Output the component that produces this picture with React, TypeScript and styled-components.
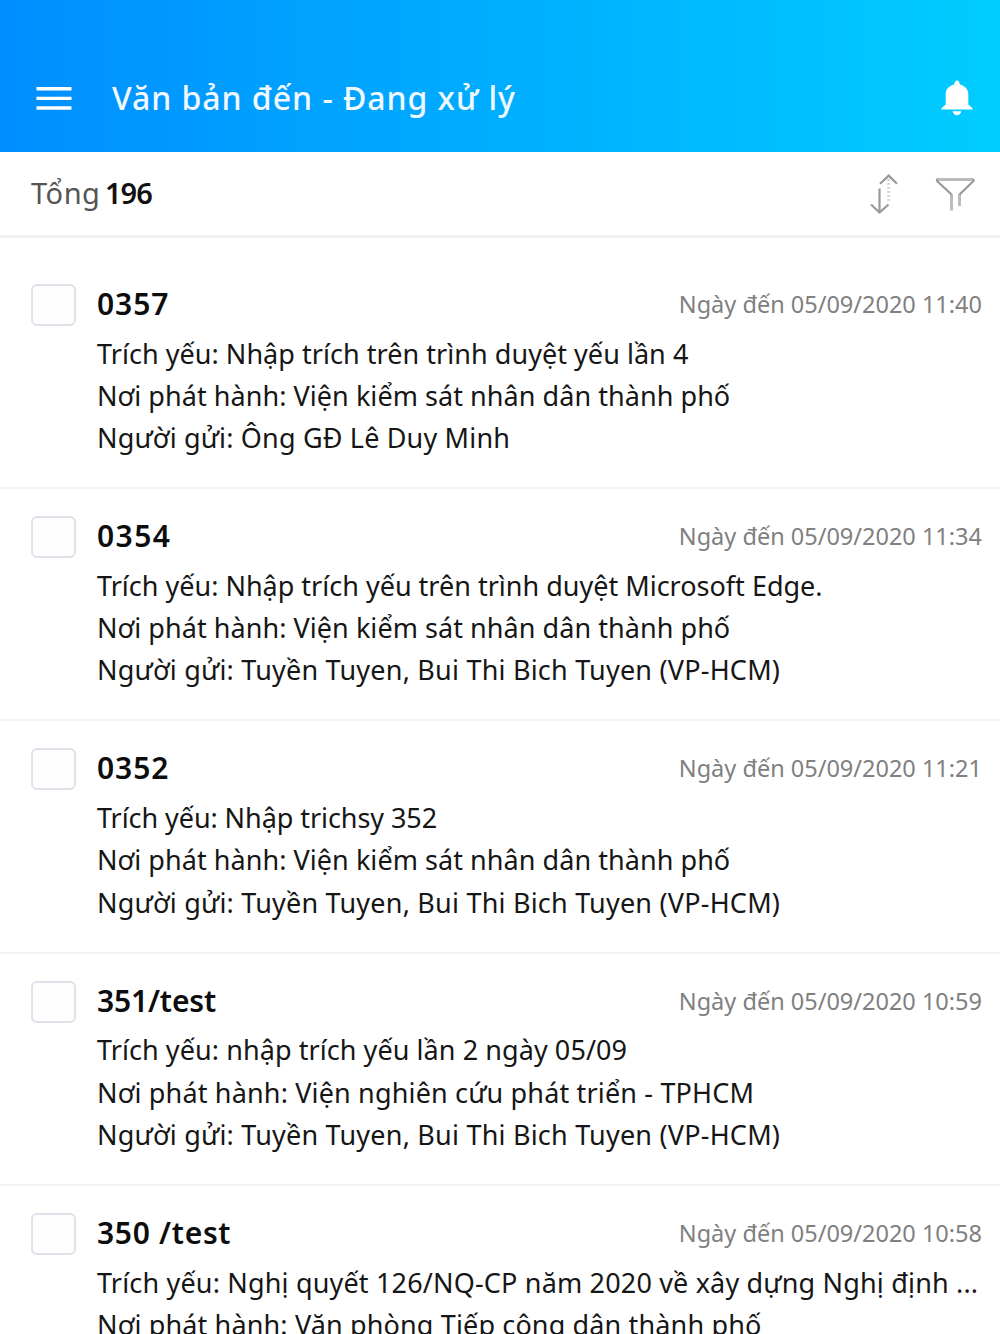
import styled, { createGlobalStyle } from 'styled-components';

const GlobalStyle = createGlobalStyle`
  * {
    box-sizing: border-box;
  }

  body {
    margin: 0;
    background: #fff;
    font-family: "Noto Sans", "Open Sans", sans-serif;
    color: #161616;
  }
`;

type Doc = {
  code: string;
  codeSpacing: number;
  date: string;
  lines: { text: string; spacing: number }[];
};

const docs: Doc[] = [
  {
    code: '0357',
    codeSpacing: 0.95,
    date: 'Ngày đến 05/09/2020 11:40',
    lines: [
      { text: 'Trích yếu: Nhập trích trên trình duyệt yếu lần 4', spacing: 0.04 },
      { text: 'Nơi phát hành: Viện kiểm sát nhân dân thành phố', spacing: 0.05 },
      { text: 'Người gửi: Ông GĐ Lê Duy Minh', spacing: 0.17 },
    ],
  },
  {
    code: '0354',
    codeSpacing: 1.45,
    date: 'Ngày đến 05/09/2020 11:34',
    lines: [
      { text: 'Trích yếu: Nhập trích yếu trên trình duyệt Microsoft Edge.', spacing: 0 },
      { text: 'Nơi phát hành: Viện kiểm sát nhân dân thành phố', spacing: 0.05 },
      { text: 'Người gửi: Tuyền Tuyen, Bui Thi Bich Tuyen (VP-HCM)', spacing: 0.21 },
    ],
  },
  {
    code: '0352',
    codeSpacing: 0.95,
    date: 'Ngày đến 05/09/2020 11:21',
    lines: [
      { text: 'Trích yếu: Nhập trichsy 352', spacing: -0.07 },
      { text: 'Nơi phát hành: Viện kiểm sát nhân dân thành phố', spacing: 0.05 },
      { text: 'Người gửi: Tuyền Tuyen, Bui Thi Bich Tuyen (VP-HCM)', spacing: 0.21 },
    ],
  },
  {
    code: '351/test',
    codeSpacing: -0.15,
    date: 'Ngày đến 05/09/2020 10:59',
    lines: [
      { text: 'Trích yếu: nhập trích yếu lần 2 ngày 05/09', spacing: 0.07 },
      { text: 'Nơi phát hành: Viện nghiên cứu phát triển - TPHCM', spacing: 0.16 },
      { text: 'Người gửi: Tuyền Tuyen, Bui Thi Bich Tuyen (VP-HCM)', spacing: 0.21 },
    ],
  },
  {
    code: '350 /test',
    codeSpacing: 0.7,
    date: 'Ngày đến 05/09/2020 10:58',
    lines: [
      { text: 'Trích yếu: Nghị quyết 126/NQ-CP năm 2020 về xây dựng Nghị định ...', spacing: 0.17 },
      { text: 'Nơi phát hành: Văn phòng Tiếp công dân thành phố', spacing: 0.14 },
    ],
  },
];

const App = () => {
  return (
    <>
      <GlobalStyle />
      <Screen>
        <Header>
          <MenuIcon viewBox="0 0 36 26">
            <path d="M0.5 2.7h35M0.5 12.4h35M0.5 22h35" />
          </MenuIcon>
          <Title>Văn bản đến - Đang xử lý</Title>
          <BellIcon viewBox="0 0 32 36">
            <path d="M16 0.6c1.6 0 2.3 1.5 2.9 4 5 1.4 8.4 4.6 8.4 9.7v10.2l4.2 3.8v1.2H0.5v-1.2l4.2-3.8v-10.2c0-5.1 3.4-8.3 8.4-9.7 0.6-2.5 1.3-4 2.9-4z" />
            <path d="M11.600 31.300h8.800c-0.500 2.400-2.100 3.900-4.400 3.900s-3.900-1.500-4.400-3.900z" />
          </BellIcon>
        </Header>

        <Toolbar>
          <TotalLabel>Tổng</TotalLabel>
          <TotalCount>196</TotalCount>
          <SortIcon viewBox="0 0 28 40">
            <path d="M9.500 14.500v23.500M1 30.500l8.500 8 9-8" />
            <path d="M10 9.800l8.700-8.200 8.300 8.200" />
            <path className="dots" d="M18.600 5v22" />
          </SortIcon>
          <FilterIcon viewBox="0 0 40 34">
            <path className="stem" d="M16.500 33.500V17M24.500 17v12" />
            <path className="stem" d="M1.500 2.500h37" />
            <path d="M16.500 17.500L2 4V2M38.500 2V4L24.500 17.500" />
          </FilterIcon>
        </Toolbar>

        <List>
          {docs.map((doc) => (
            <Row key={doc.code}>
              <Checkbox />
              <Content>
                <RowHead>
                  <Code $spacing={doc.codeSpacing}>{doc.code}</Code>
                  <DateText>{doc.date}</DateText>
                </RowHead>
                {doc.lines.map((line) => (
                  <Line key={line.text} $spacing={line.spacing}>{line.text}</Line>
                ))}
              </Content>
            </Row>
          ))}
        </List>
      </Screen>
    </>
  );
};

const Screen = styled.div`
  width: 1000px;
  height: 1334px;
  overflow: hidden;
  background: #fff;
`;

const Header = styled.header`
  display: flex;
  align-items: flex-start;
  height: 152px;
  padding: 76px 27px 0 36px;
  background: linear-gradient(90deg, #008eff, #00cdff);
`;

const MenuIcon = styled.svg`
  width: 36px;
  height: 26px;
  margin: 10px 40px 0 0;
  fill: none;
  stroke: #fff;
  stroke-width: 3.4;
`;

const Title = styled.h1`
  flex: 1;
  margin: 0;
  font-size: 32px;
  font-weight: 500;
  line-height: 44px;
  letter-spacing: 0.95px;
  white-space: nowrap;
  color: #f2f8ff;
`;

const BellIcon = styled.svg`
  width: 32px;
  height: 36px;
  margin-top: 4px;
  fill: #fff;
`;

const Toolbar = styled.div`
  display: flex;
  align-items: center;
  height: 86px;
  padding: 0 25px 0 31px;
  border-bottom: 3px solid #eef2f5;
  font-size: 29px;
  line-height: 40px;
`;

const TotalLabel = styled.span`
  margin-bottom: 2px;
  letter-spacing: 0.5px;
  color: #555;
`;

const TotalCount = styled.strong`
  flex: 1;
  margin: 0 0 2px 4.5px;
  font-weight: 600;
  letter-spacing: -0.9px;
  color: #111;
`;

const SortIcon = styled.svg`
  width: 28px;
  height: 40px;
  margin-right: 37px;
  fill: none;
  stroke: #999;
  stroke-width: 2.2;

  .dots {
    stroke: #d2d2d2;
    stroke-width: 3;
    stroke-dasharray: 1.8 2.2;
  }
`;

const FilterIcon = styled.svg`
  width: 40px;
  height: 34px;
  fill: none;
  stroke: #999;
  stroke-width: 2.2;
  stroke-linejoin: round;

  .stem {
    stroke: #bbb;
    stroke-width: 3;
  }
`;

const List = styled.div`
  padding-top: 19px;
`;

const Row = styled.div`
  display: flex;
  height: 232.2px;
  padding: 25px 18px 0 31px;
  border-bottom: 2px solid #f3f4f5;
`;

const Checkbox = styled.div`
  flex: none;
  width: 45px;
  height: 42px;
  margin: 2px 21px 0 0;
  border: 2px solid #dde3e8;
  border-radius: 6px;
  background: #fefefe;
`;

const Content = styled.div`
  flex: 1;
  min-width: 0;
`;

const RowHead = styled.div`
  display: flex;
  justify-content: space-between;
  align-items: flex-start;
  height: 42px;
  margin-bottom: 8.8px;
`;

const Code = styled.span<{ $spacing: number }>`
  font-size: 30px;
  font-weight: 600;
  line-height: 44px;
  letter-spacing: ${(p) => p.$spacing}px;
  color: #0d0d0d;
`;

const DateText = styled.span`
  font-size: 23.5px;
  line-height: 45px;
  color: #808080;
`;

const Line = styled.div<{ $spacing: number }>`
  font-size: 27px;
  line-height: 42.2px;
  letter-spacing: ${(p) => p.$spacing}px;
  white-space: nowrap;
`;

export default App;
